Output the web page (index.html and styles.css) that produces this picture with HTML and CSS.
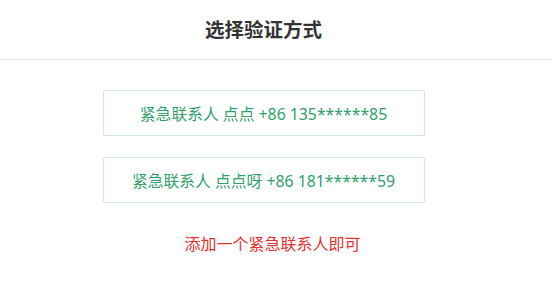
FILE: index.html
```html
<!DOCTYPE html>
<html>
<head>
<meta charset="utf-8">
<link rel="stylesheet" href="styles.css">
</head>
<body>
<div class="header"><div class="title">选择验证方式</div></div>
<div class="content">
  <div class="option">紧急联系人 点点 +86 135******85</div>
  <div class="option">紧急联系人 点点呀 +86 181******59</div>
  <div class="tip">添加一个紧急联系人即可</div>
</div>
</body>
</html>
```
FILE: styles.css
```css
html, body {
  margin: 0;
  padding: 0;
  background: #fff;
  font-family: "Noto Sans", "Noto Sans CJK SC", sans-serif;
}
.header {
  height: 59px;
  border-bottom: 1px solid #e6e6e6;
  display: flex;
  align-items: center;
}
.title {
  width: 527px;
  text-align: center;
  font-size: 19.5px;
  font-weight: bold;
  color: #333;
  margin-top: -2px;
}
.content {
  width: 527px;
  display: flex;
  flex-direction: column;
  align-items: center;
  padding-top: 30px;
  gap: 21px;
}
.option {
  box-sizing: border-box;
  width: 322px;
  height: 46px;
  border: 1px solid #cfe8de;
  border-radius: 2px;
  display: flex;
  align-items: center;
  justify-content: center;
  color: #2f9f6c;
  font-size: 15.8px;
}
.tip {
  margin-top: 9px;
  padding-left: 18px;
  color: #e5322d;
  font-size: 16px;
  line-height: 22px;
}
```
